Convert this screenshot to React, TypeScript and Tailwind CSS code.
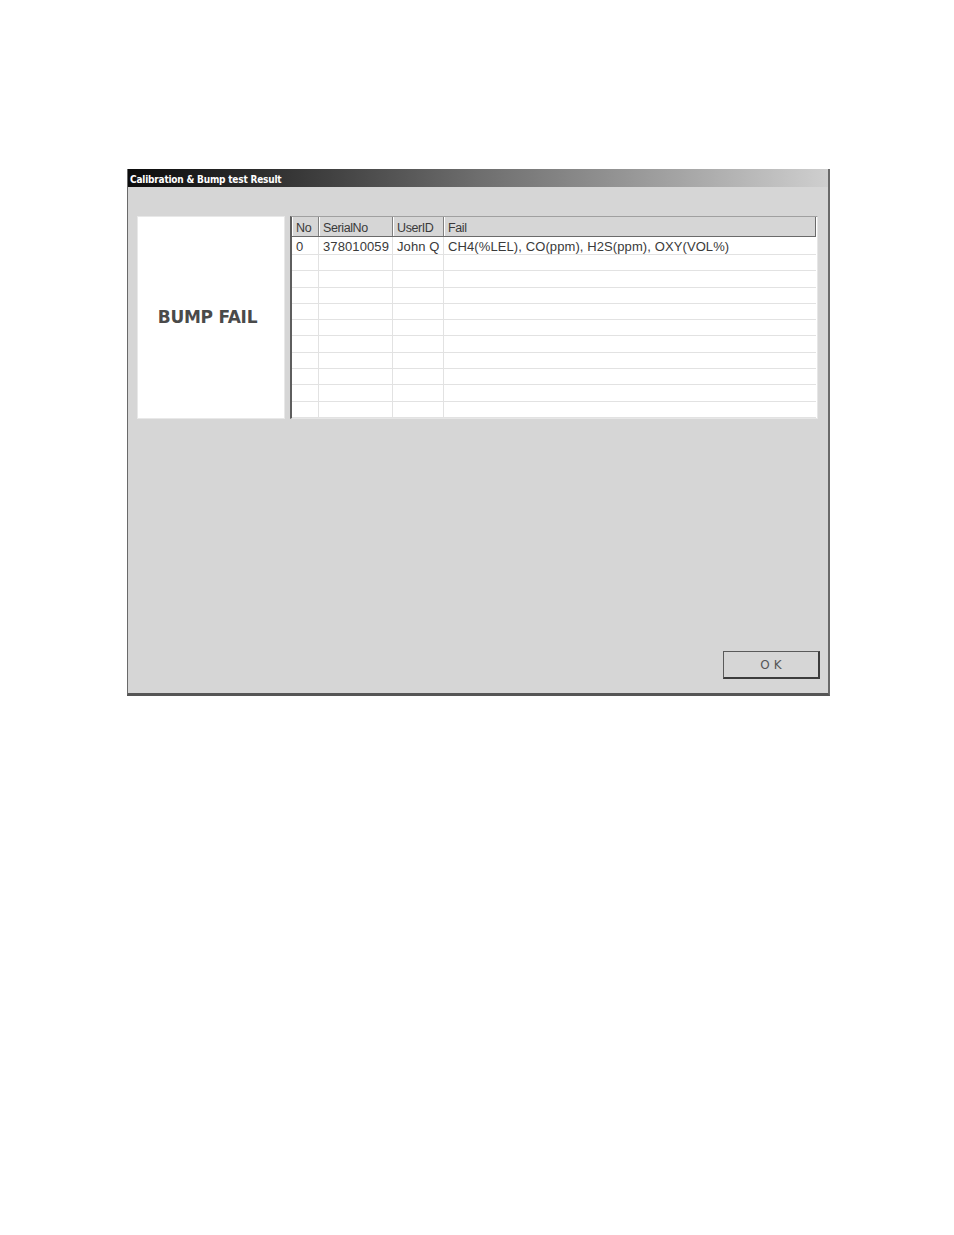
import React from "react";

const cols = [
  { w: "w-[27px]", label: "No" },
  { w: "w-[74px]", label: "SerialNo" },
  { w: "w-[51px]", label: "UserID" },
  { w: "flex-1", label: "Fail" },
];

const first = ["0", "378010059", "John Q", "CH4(%LEL), CO(ppm), H2S(ppm), OXY(VOL%)"];

export default function App() {
  const rows = Array.from({ length: 11 }, (_, i) => i);
  return (
    <div className="min-h-[1235px] w-[954px] bg-white pt-[169px] pl-[127px]">
      <div className="flex h-[527px] w-[703px] flex-col border-l border-r-2 border-b-[3px] border-l-[#6a6a6a] border-r-[#6a6a6a] border-b-[#555] bg-[#d6d6d6]">
        <div className="flex h-[18px] items-center bg-gradient-to-r from-[#0c0c0c] via-[#6e6e6e] to-[#cfcfcf] pl-[2px] pt-[2px]">
          <span className="text-[10px] font-bold text-white" style={{ fontFamily: "'DejaVu Sans Condensed', 'Liberation Sans', sans-serif", letterSpacing: "-0.2px" }}>
            Calibration &amp; Bump test Result
          </span>
        </div>
        <div className="flex flex-1 flex-col pt-[29px] pl-[9px] pr-[8px] pb-[14px]">
          <div className="flex h-[203px]">
            <div className="flex w-[148px] items-center justify-center border border-[#e8e8e8] bg-white pr-[7px]">
              <span className="text-[17px] font-bold text-[#4a4a4a]" style={{ fontFamily: "'DejaVu Sans', sans-serif", letterSpacing: "-0.3px" }}>
                BUMP FAIL
              </span>
            </div>
            <div className="ml-[5px] flex w-[528px] flex-col border-l-2 border-t border-r border-b border-l-[#5e5e5e] border-t-[#a0a0a0] border-r-[#e6e6e6] border-b-[#e6e6e6] bg-white pr-[1px]" style={{ fontFamily: "'Liberation Sans', sans-serif" }}>
              <div className="flex h-[20px] border-b border-r border-b-[#6a6a6a] border-r-[#6a6a6a] bg-[#d6d6d6]">
                {cols.map((c, i) => (
                  <div key={i} className={`${c.w} flex items-center border-l border-l-white ${i < 3 ? "border-r border-r-[#808080]" : ""} px-[3px] pt-[3px] text-[12.5px] tracking-[-0.4px] text-[#3a3a3a]`}>
                    {c.label}
                  </div>
                ))}
              </div>
              {rows.map((r) => (
                <div key={r} className={`flex ${r === 0 ? "h-[18px]" : "h-[16.4px]"} border-b border-b-[#e2e2e2]`}>
                  {cols.map((c, i) => (
                    <div key={i} className={`${c.w} flex items-center ${i < 3 ? "border-r border-r-[#e2e2e2]" : ""} px-[4px] pt-[2px] text-[13px] tracking-[0.1px] text-[#3a3a3a] whitespace-nowrap`}>
                      {r === 0 ? first[i] : ""}
                    </div>
                  ))}
                </div>
              ))}
            </div>
          </div>
          <div className="flex-1" />
          <div className="flex justify-end">
            <button className="flex h-[28px] w-[97px] items-center justify-center border border-t-[#5a5a5a] border-l-[#5a5a5a] border-r-2 border-b-2 border-r-[#3c3c3c] border-b-[#3c3c3c] bg-[#d6d6d6] pl-[4px] text-[12px] tracking-[4px] text-[#555]" style={{ fontFamily: "'DejaVu Sans', sans-serif" }}>
              OK
            </button>
          </div>
        </div>
      </div>
    </div>
  );
}
